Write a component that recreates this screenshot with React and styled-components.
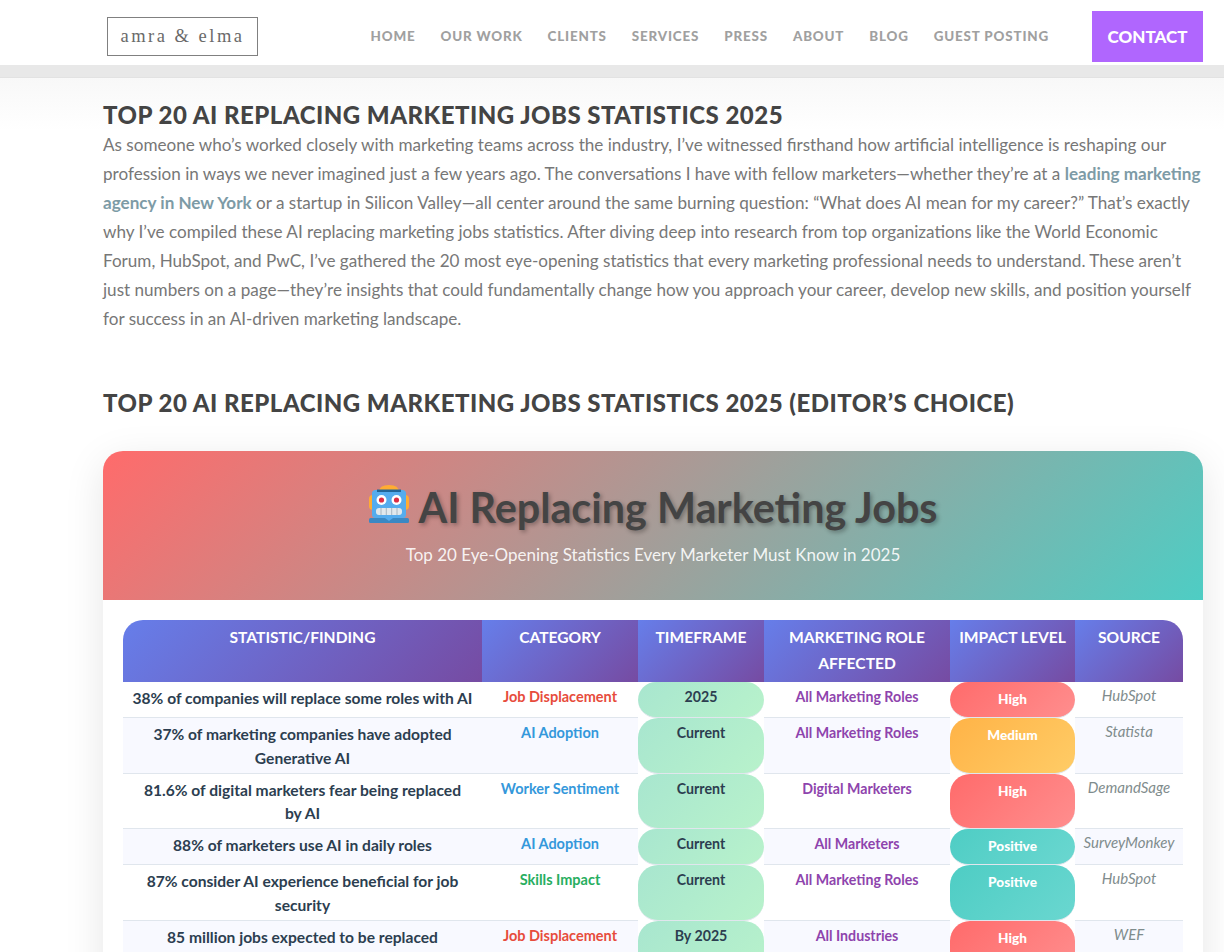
import React from 'react'
import styled, { createGlobalStyle } from 'styled-components'

const Global = createGlobalStyle`
  html, body {
    margin: 0;
    height: 952px;
    overflow: hidden;
    background: #fff;
    font-family: Lato, "Open Sans", sans-serif;
  }
`

const Header = styled.header`
  height: 65px;
  background: #fff;
  display: flex;
  align-items: center;
  padding: 0 21px 0 107px;
`

const Logo = styled.div`
  width: 151px;
  height: 39px;
  box-sizing: border-box;
  border: 1px solid #808080;
  margin-top: 8px;
  display: flex;
  align-items: center;
  justify-content: center;
  font-family: "Liberation Serif", serif;
  font-size: 18.5px;
  letter-spacing: 2.5px;
  color: #6a6a6a;
`

const Nav = styled.nav`
  margin-left: auto;
  display: flex;
  align-items: center;
  gap: 25px;
  margin-right: 43px;
  margin-top: 7px;
`

const NavItem = styled.a`
  font-size: 13.4px;
  font-weight: 900;
  letter-spacing: 0.83px;
  color: #a0a0a0;
`

const Contact = styled.a`
  width: 111px;
  height: 51px;
  margin-top: 8px;
  background: #b066fe;
  color: #fff;
  font-size: 17px;
  font-weight: 900;
  display: flex;
  align-items: center;
  justify-content: center;
`

const Shade = styled.div`
  height: 66px;
  background: linear-gradient(#f8f8f8, #fff);
  border-top: 12px solid #e8e8e8;
  box-sizing: border-box;
  box-shadow: inset 0 1px 0 #e2e2e2;
  margin-bottom: -31px;
`

const Main = styled.main`
  position: relative;
  padding: 0 21px 0 103px;
`

const Title = styled.h2`
  margin: 0;
  font-size: 24px;
  line-height: 30px;
  font-weight: 900;
  letter-spacing: 0.49px;
  color: #444;
  text-transform: uppercase;
  white-space: nowrap;
`

const Intro = styled.p`
  margin: 0 0 55px;
  font-size: 17.1px;
  line-height: 29px;
  color: #777;
  white-space: nowrap;
`

const Strong = styled.a`
  font-weight: 700;
  color: #7d9ba6;
`

const Card = styled.section`
  margin-top: 33px;
  background: #fff;
  border-radius: 20px 20px 0 0;
  box-shadow: 0 10px 40px rgba(0, 0, 0, 0.1);
`

const Hero = styled.div`
  height: 149px;
  box-sizing: border-box;
  padding-top: 30px;
  border-radius: 20px 20px 0 0;
  background: linear-gradient(135deg, #ff6b6b, #4ecdc4);
  display: flex;
  flex-direction: column;
  align-items: center;
`

const HeroTitle = styled.h1`
  margin: 0;
  display: flex;
  align-items: center;
  gap: 10px;
  height: 52px;
  font-size: 41.3px;
  font-weight: 700;
  color: #444;
  text-shadow: 2px 2px 4px rgba(0, 0, 0, 0.3);
`

const HeroSub = styled.p`
  margin: 9px 0 0;
  font-size: 17px;
  line-height: 26px;
  color: rgba(255, 255, 255, 0.9);
`

const RobotIcon = styled.svg`
  margin-top: -6px;
`

const TableWrap = styled.div`
  padding: 20px;
`

const Table = styled.table`
  width: 1060px;
  table-layout: fixed;
  border-collapse: separate;
  border-spacing: 0;
  border-radius: 20px 20px 0 0;
  overflow: hidden;
  text-align: center;
`

const Th = styled.th`
  width: ${p => p.$w}px;
  height: 62px;
  box-sizing: border-box;
  padding: 4px 6px 6px;
  vertical-align: top;
  background: linear-gradient(135deg, #667eea, #764ba2);
  color: #fff;
  font-size: 15.6px;
  line-height: 26px;
  font-weight: 700;
  text-transform: uppercase;
`

const Row = styled.tr`
  --row-bg: ${p => (p.$even ? '#f8f9ff' : '#fff')};
`

const Td = styled.td`
  padding: 4px 8px 3px;
  vertical-align: top;
  background: var(--row-bg);
  border-bottom: 1px solid #e0e6ed;
  font-size: 14.5px;
  line-height: 22px;
  font-weight: 500;
`

const StatCell = styled(Td)`
  padding-top: 5px;
  padding-bottom: 2px;
  font-size: 15.6px;
  line-height: 23.75px;
  font-weight: 700;
  color: #2c3e50;
  white-space: pre-line;
`

const CategoryCell = styled(Td)`
  color: ${p => p.$color};
  font-weight: 700;
`

const TimeCell = styled(Td)`
  background: linear-gradient(135deg, #a8e6cf, #b8f2cb);
  border-radius: 20px;
  color: #2c3e50;
  font-size: 14.2px;
  font-weight: 700;
`

const RoleCell = styled(Td)`
  color: #8e44ad;
  font-size: 14.2px;
  font-weight: 700;
`

const impactColors = {
  High: 'linear-gradient(135deg, #ff6b6b, #ff8e8e)',
  Medium: 'linear-gradient(135deg, #ffb347, #ffcc66)',
  Positive: 'linear-gradient(135deg, #4ecdc4, #6ad7d0)',
}

const ImpactCell = styled(Td)`
  padding-top: 6px;
  padding-bottom: 7px;
  background: ${p => impactColors[p.$level]};
  border-radius: 20px;
  color: #fff;
  font-weight: 900;
  font-size: 13.6px;
`

const SourceCell = styled(Td)`
  padding-top: 2px;
  padding-left: 4px;
  padding-right: 4px;
  font-size: 15px;
  font-weight: 400;
  font-style: italic;
  color: #7f8c8d;
`

const Robot = () => (
  <RobotIcon width="40" height="38" viewBox="0 0 40 38">
    <path d="M10 7Q10 0 20 0T30 7z" fill="#ffac33" />
    <rect x="0" y="10" width="8" height="15" rx="4" fill="#ffac33" />
    <rect x="32" y="10" width="8" height="15" rx="4" fill="#ffac33" />
    <rect x="3" y="5" width="34" height="28" rx="3.5" fill="#55acee" />
    <rect x="8" y="4.5" width="24" height="2.5" fill="#269" />
    <circle cx="12.5" cy="15" r="5" fill="#fff" />
    <circle cx="27.5" cy="15" r="5" fill="#fff" />
    <circle cx="12.5" cy="15" r="2.6" fill="#dd2e44" />
    <circle cx="27.5" cy="15" r="2.6" fill="#dd2e44" />
    <rect x="7" y="23" width="26" height="7" rx="3" fill="#e1e8ed" />
    <path d="M12 23v7M17.300 23v7M22.700 23v7M28 23v7" stroke="#99aab5" strokeWidth="0.8" />
    <rect x="0" y="33" width="40" height="5" rx="1.5" fill="#3b88c3" />
    <path d="M16 33h8l-4 3z" fill="#55acee" />
  </RobotIcon>
)

const navItems = ['Home', 'Our Work', 'Clients', 'Services', 'Press', 'About', 'Blog', 'Guest Posting']

const columns = [
  ['Statistic/Finding', 359],
  ['Category', 156],
  ['Timeframe', 126],
  ['Marketing Role Affected', 186],
  ['Impact Level', 125],
  ['Source', 108],
]

const red = '#e74c3c'
const blue = '#3498db'
const green = '#27ae60'

const rows = [
  ['38% of companies will replace some roles with AI', 'Job Displacement', red, '2025', 'All Marketing Roles', 'High', 'HubSpot'],
  ['37% of marketing companies have adopted\nGenerative AI', 'AI Adoption', blue, 'Current', 'All Marketing Roles', 'Medium', 'Statista'],
  ['81.6% of digital marketers fear being replaced\nby AI', 'Worker Sentiment', blue, 'Current', 'Digital Marketers', 'High', 'DemandSage'],
  ['88% of marketers use AI in daily roles', 'AI Adoption', blue, 'Current', 'All Marketers', 'Positive', 'SurveyMonkey'],
  ['87% consider AI experience beneficial for job\nsecurity', 'Skills Impact', green, 'Current', 'All Marketing Roles', 'Positive', 'HubSpot'],
  ['85 million jobs expected to be replaced\nby AI', 'Job Displacement', red, 'By 2025', 'All Industries', 'High', 'WEF'],
]

export default function App() {
  return (
    <>
      <Global />
      <Header>
        <Logo>amra &amp; elma</Logo>
        <Nav>
          {navItems.map(item => (
            <NavItem key={item}>{item.toUpperCase()}</NavItem>
          ))}
        </Nav>
        <Contact>CONTACT</Contact>
      </Header>
      <Shade />
      <Main>
        <Title>Top 20 AI Replacing Marketing Jobs Statistics 2025</Title>
        <Intro>
          As someone who’s worked closely with marketing teams across the industry, I’ve witnessed firsthand how artificial intelligence is reshaping our<br />
          profession in ways we never imagined just a few years ago. The conversations I have with fellow marketers—whether they’re at a <Strong>leading marketing<br />
          agency in New York</Strong> or a startup in Silicon Valley—all center around the same burning question: “What does AI mean for my career?” That’s exactly<br />
          why I’ve compiled these AI replacing marketing jobs statistics. After diving deep into research from top organizations like the World Economic<br />
          Forum, HubSpot, and PwC, I’ve gathered the 20 most eye-opening statistics that every marketing professional needs to understand. These aren’t<br />
          just numbers on a page—they’re insights that could fundamentally change how you approach your career, develop new skills, and position yourself<br />
          for success in an AI-driven marketing landscape.
        </Intro>
        <Title>Top 20 AI Replacing Marketing Jobs Statistics 2025 (Editor’s Choice)</Title>
        <Card>
          <Hero>
            <HeroTitle><Robot />AI Replacing Marketing Jobs</HeroTitle>
            <HeroSub>Top 20 Eye-Opening Statistics Every Marketer Must Know in 2025</HeroSub>
          </Hero>
          <TableWrap>
            <Table>
              <thead>
                <tr>
                  {columns.map(([label, w]) => (
                    <Th key={label} $w={w}>{label}</Th>
                  ))}
                </tr>
              </thead>
              <tbody>
                {rows.map((r, i) => (
                  <Row key={r[0]} $even={i % 2 === 1}>
                    <StatCell>{r[0]}</StatCell>
                    <CategoryCell $color={r[2]}>{r[1]}</CategoryCell>
                    <TimeCell>{r[3]}</TimeCell>
                    <RoleCell>{r[4]}</RoleCell>
                    <ImpactCell $level={r[5]}>{r[5]}</ImpactCell>
                    <SourceCell>{r[6]}</SourceCell>
                  </Row>
                ))}
              </tbody>
            </Table>
          </TableWrap>
        </Card>
      </Main>
    </>
  )
}
